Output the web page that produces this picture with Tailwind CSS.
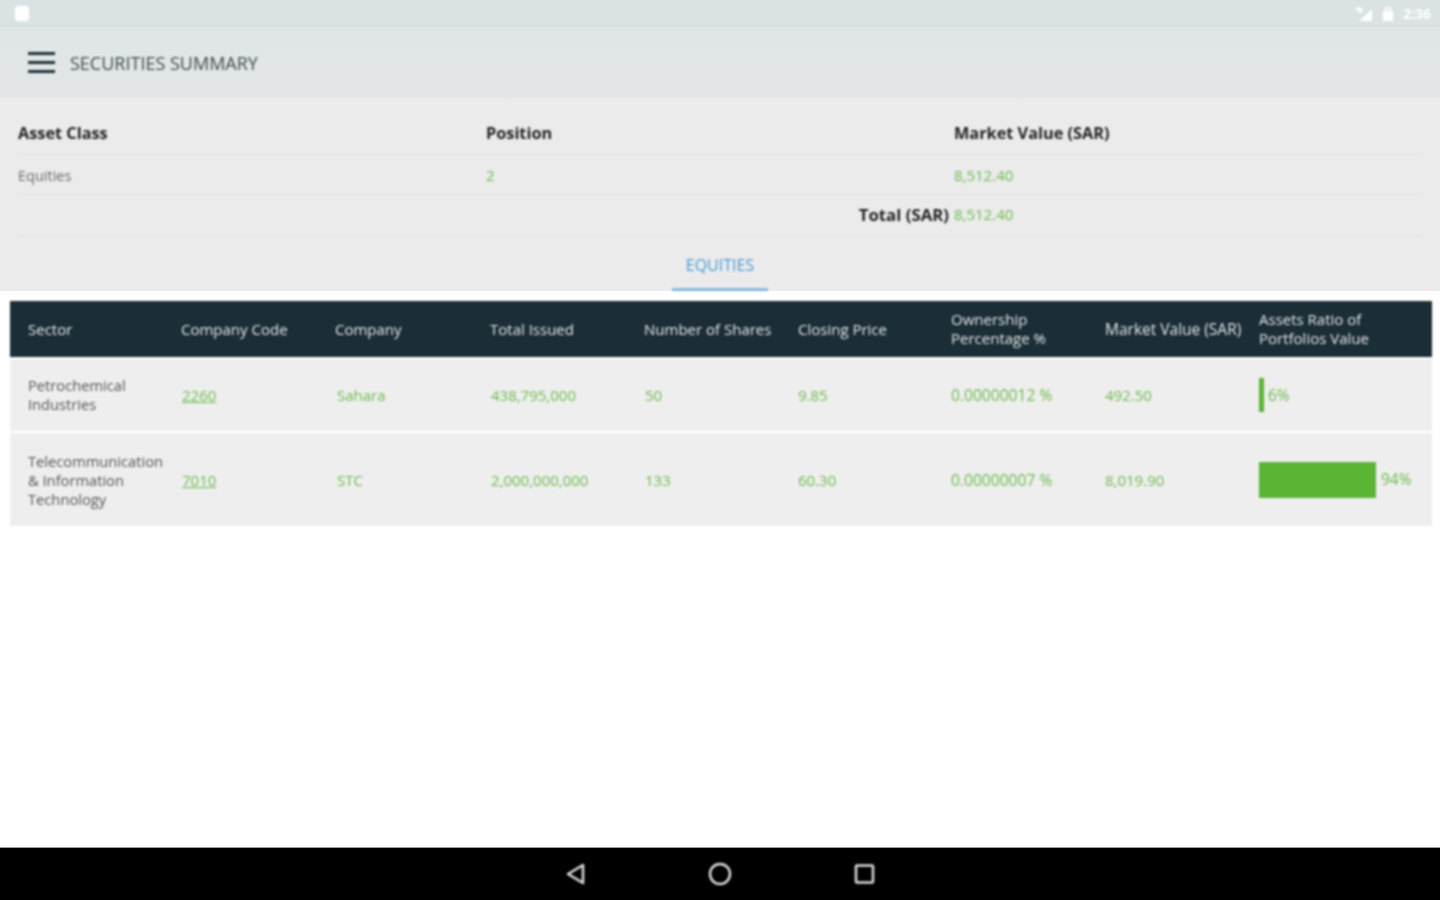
<!DOCTYPE html>
<html lang="en">
<head>
    <meta charset="UTF-8">
    <meta name="viewport" content="width=device-width, initial-scale=1.0">
    <title>Securities Summary</title>
    <script src="https://cdn.jsdelivr.net/npm/@tailwindcss/browser@4"></script>
</head>
<body class="bg-white">
    <div class="h-[900px] w-[1440px] flex flex-col overflow-hidden font-['Open_Sans',sans-serif] text-[15px] leading-[19px]">
        <!-- Status bar -->
        <div class="h-[27px] shrink-0 bg-[#dae2e3] flex items-center justify-between pl-[15px] pr-[9px]">
            <div class="w-[14px] h-[15px] bg-white rounded-[3px] blur-[0.8px]"></div>
            <div class="flex items-center gap-[9px] text-white blur-[0.8px]">
                <svg width="18" height="16" viewBox="0 0 18 16"><path d="M0 2 L6 1 L8 5 L5 7 Z" fill="#fff"/><path d="M4 15 L17 3 V15 Z" fill="#fff"/></svg>
                <svg width="12" height="17" viewBox="0 0 12 17"><rect x="1" y="6" width="10" height="10" fill="#fff"/><path d="M3.5 6 V3 H8.5 V6" fill="none" stroke="#fff" stroke-width="1.5"/></svg>
                <span class="text-[14px] font-bold">2:36</span>
            </div>
        </div>

        <!-- App bar -->
        <div class="h-[71px] shrink-0 bg-gradient-to-b from-[#dfe5e5] to-[#e3e6e6] flex items-center pl-[28px] gap-[15px]">
            <div class="w-[27px] flex flex-col gap-[6px] blur-[0.8px]">
                <div class="h-[3px] bg-[#1e3038]"></div>
                <div class="h-[3px] bg-[#1e3038]"></div>
                <div class="h-[3px] bg-[#1e3038]"></div>
            </div>
            <span class="text-[18px] text-[#3f4a4e] pt-[2px] blur-[0.8px]">SECURITIES SUMMARY</span>
        </div>

        <!-- Summary -->
        <div class="h-[193px] shrink-0 bg-[#ebebeb] flex flex-col items-center">
            <div class="w-[1404px] blur-[0.8px]">
                <div class="grid grid-cols-3 h-[56px] items-center border-b border-[#e3e3e3] font-bold text-[16.3px] text-[#222]">
                    <span class="pt-[16px]">Asset Class</span>
                    <span class="pt-[16px]">Position</span>
                    <span class="pt-[16px]">Market Value (SAR)</span>
                </div>
                <div class="grid grid-cols-3 h-[40px] items-center border-b border-[#e3e3e3] pt-[3px] text-[#6b6b6b]">
                    <span class="text-[14.5px]">Equities</span>
                    <span class="text-[#6dbb4e]">2</span>
                    <span class="text-[#6dbb4e]">8,512.40</span>
                </div>
                <div class="grid grid-cols-3 h-[42px] items-center border-b border-[#e3e3e3]">
                    <span></span>
                    <span class="font-bold text-[16.8px] text-[#222] text-right pr-[5px]">Total (SAR)</span>
                    <span class="text-[#6dbb4e]">8,512.40</span>
                </div>
            </div>
            <div class="mt-[17px] w-[96px] h-[39px] border-b-[3px] border-[#8ab8e0] text-center text-[16px] text-[#4a9bd8] pt-[3px] blur-[0.8px]">EQUITIES</div>
        </div>

        <!-- Equities table -->
        <div class="mt-[10px] ml-[10px] w-[1422px] blur-[0.8px]">
            <div class="grid grid-cols-[153px_154px_155px_154px_154px_153px_154px_154px_1fr] h-[56px] items-center bg-[#1b2d36] text-[#e4e8e9] font-medium pl-[18px]">
                <span>Sector</span>
                <span>Company Code</span>
                <span>Company</span>
                <span>Total Issued</span>
                <span class="whitespace-nowrap">Number of Shares</span>
                <span>Closing Price</span>
                <span>Ownership<br>Percentage %</span>
                <span class="whitespace-nowrap text-[15.5px]">Market Value (SAR)</span>
                <span>Assets Ratio of<br>Portfolios Value</span>
            </div>
            <div class="mt-[2px] grid grid-cols-[154px_155px_154px_154px_153px_153px_154px_154px_1fr] h-[72px] items-center bg-[#eeeeee] text-[#6dbb4e] pl-[18px]">
                <span class="text-[#555] text-[14.7px]">Petrochemical<br>Industries</span>
                <a class="underline">2260</a>
                <span>Sahara</span>
                <span>438,795,000</span>
                <span>50</span>
                <span>9.85</span>
                <span class="whitespace-nowrap text-[15.6px]">0.00000012 %</span>
                <span>492.50</span>
                <div class="flex items-center gap-[4px]">
                    <div class="w-[5px] h-[34px] bg-[#5ab535]"></div>
                    <span class="text-[15.5px]">6%</span>
                </div>
            </div>
            <div class="mt-[2px] grid grid-cols-[154px_155px_154px_154px_153px_153px_154px_154px_1fr] h-[93px] items-center bg-[#eeeeee] text-[#6dbb4e] pl-[18px] pt-[2px]">
                <span class="text-[#555] text-[14.7px] whitespace-nowrap">Telecommunication<br>&amp; Information<br>Technology</span>
                <a class="underline">7010</a>
                <span>STC</span>
                <span>2,000,000,000</span>
                <span>133</span>
                <span>60.30</span>
                <span class="whitespace-nowrap text-[15.6px]">0.00000007 %</span>
                <span>8,019.90</span>
                <div class="flex items-center gap-[5px] -mt-[2px]">
                    <div class="w-[117px] h-[36px] bg-[#5ab535]"></div>
                    <span class="text-[15.5px]">94%</span>
                </div>
            </div>
        </div>

        <!-- Nav bar -->
        <div class="mt-auto h-[53px] shrink-0 bg-black border-t border-[#999] flex items-center justify-center gap-[116px]">
            <svg class="blur-[0.8px]" width="28" height="28" viewBox="0 0 28 28"><path d="M21 5 V23 L6 14 Z" fill="none" stroke="#ddd" stroke-width="2.5" stroke-linejoin="round"/></svg>
            <svg class="blur-[0.8px]" width="28" height="28" viewBox="0 0 28 28"><circle cx="14" cy="14" r="10" fill="none" stroke="#ddd" stroke-width="2.5"/></svg>
            <svg class="blur-[0.8px]" width="28" height="28" viewBox="0 0 28 28"><rect x="6" y="5.5" width="17" height="17" rx="1" fill="none" stroke="#ddd" stroke-width="2.5"/></svg>
        </div>
    </div>
</body>
</html>
